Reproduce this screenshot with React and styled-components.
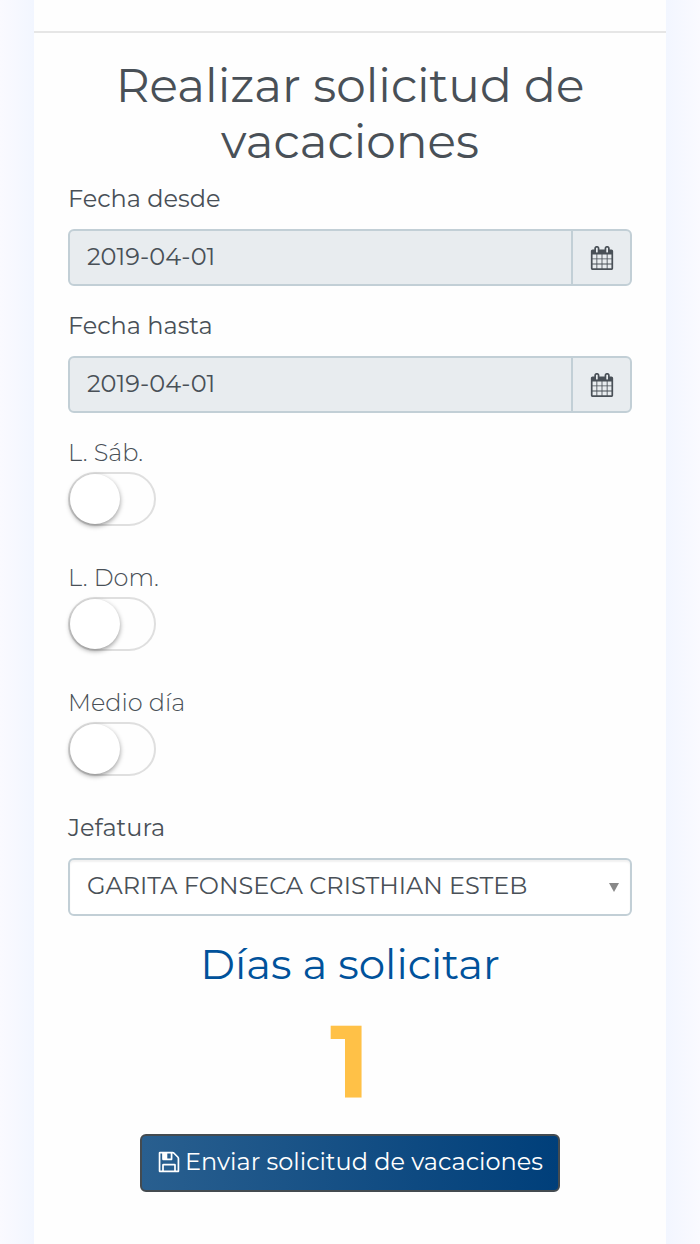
import React, { useState } from "react";
import styled, { createGlobalStyle } from "styled-components";

const App = () => {
  const [boss, setBoss] = useState("garita");

  return (
    <>
      <GlobalStyle />
      <Page>
        <Card>
          <Divider />
          <Form onSubmit={(e) => e.preventDefault()}>
            <Title>Realizar solicitud de vacaciones</Title>

            <DateField id="desde" label="Fecha desde" value="2019-04-01" />
            <DateField id="hasta" label="Fecha hasta" value="2019-04-01" />

            <Toggle id="sabado" label="L. Sáb." />
            <Toggle id="domingo" label="L. Dom." />
            <Toggle id="medio" label="Medio día" />

            <Field>
              <Label htmlFor="jefatura">Jefatura</Label>
              <SelectBox>
                <Select id="jefatura" value={boss} onChange={(e) => setBoss(e.target.value)}>
                  <option value="garita">GARITA FONSECA CRISTHIAN ESTEB</option>
                </Select>
                <Arrow viewBox="0 0 10 9" aria-hidden="true">
                  <path d="M0 0h10L5 9z" />
                </Arrow>
              </SelectBox>
            </Field>

            <Subtitle>Días a solicitar</Subtitle>
            <Days>1</Days>

            <Submit type="submit">
              <SaveIcon />
              Enviar solicitud de vacaciones
            </Submit>
          </Form>
        </Card>
      </Page>
    </>
  );
};

const DateField = ({ id, label, value }) => (
  <Field>
    <Label htmlFor={id}>{label}</Label>
    <InputGroup>
      <Input id={id} type="text" value={value} readOnly />
      <Addon type="button" aria-label={`Elegir ${label}`}>
        <CalendarIcon />
      </Addon>
    </InputGroup>
  </Field>
);

const Toggle = ({ id, label }) => (
  <SwitchField>
    <Label htmlFor={id} $light>{label}</Label>
    <Switch id={id} type="checkbox" role="switch" />
  </SwitchField>
);

const CalendarIcon = () => (
  <Icon viewBox="0 0 1792 1792" aria-hidden="true">
    <path d="M192 1664h288v-288h-288v288zm352 0h320v-288h-320v288zm-352-352h288v-320h-288v320zm352 0h320v-320h-320v320zm-352-384h288v-288h-288v288zm736 736h320v-288h-320v288zm-384-736h320v-288h-320v288zm768 736h288v-288h-288v288zm-384-352h320v-320h-320v320zm-352-864v-288q0-13-9.5-22.5t-22.5-9.5h-64q-13 0-22.5 9.5t-9.5 22.5v288q0 13 9.5 22.5t22.5 9.5h64q13 0 22.5-9.5t9.5-22.5zm736 864h288v-320h-288v320zm-384-384h320v-288h-320v288zm384 0h288v-288h-288v288zm32-480v-288q0-13-9.5-22.5t-22.5-9.5h-64q-13 0-22.5 9.5t-9.5 22.5v288q0 13 9.5 22.5t22.5 9.5h64q13 0 22.5-9.5t9.5-22.5zm384-64v1280q0 52-38 90t-90 38h-1408q-52 0-90-38t-38-90v-1280q0-52 38-90t90-38h128v-96q0-66 47-113t113-47h64q66 0 113 47t47 113v96h384v-96q0-66 47-113t113-47h64q66 0 113 47t47 113v96h128q52 0 90 38t38 90z" />
  </Icon>
);

const SaveIcon = () => (
  <Icon viewBox="0 0 1792 1792" aria-hidden="true">
    <path d="M512 1536h768v-384h-768v384zm896 0h128v-896q0-14-10-38.5t-20-34.5l-281-281q-10-10-34-20t-39-10v416q0 40-28 68t-68 28h-576q-40 0-68-28t-28-68v-416h-128v1280h128v-416q0-40 28-68t68-28h832q40 0 68 28t28 68v416zm-384-928v-320q0-13-9.5-22.5t-22.5-9.5h-192q-13 0-22.5 9.5t-9.5 22.5v320q0 13 9.5 22.5t22.5 9.5h192q13 0 22.5-9.5t9.5-22.5zm640 32v928q0 40-28 68t-68 28h-1344q-40 0-68-28t-28-68v-1344q0-40 28-68t68-28h928q40 0 88 20t76 48l280 280q28 28 48 76t20 88z" />
  </Icon>
);

const GlobalStyle = createGlobalStyle`
  * {
    box-sizing: border-box;
  }

  body {
    margin: 0;
    color: #495057;
    font-family: Montserrat, Inter, sans-serif;
    font-size: 24px;
    line-height: 36px;
  }

  button, input, select {
    margin: 0;
    font: inherit;
    color: inherit;
  }
`;

const Page = styled.div`
  min-height: 100vh;
  padding: 0 34px;
  display: flex;
  background: linear-gradient(
    to right,
    #fafaff 0,
    #f2f6ff 34px,
    #f2f6ff calc(100% - 34px),
    #fafaff 100%
  );
`;

const Card = styled.main`
  flex: 1;
  min-width: 0;
  padding-top: 31px;
  background: #fefefe;
`;

const Divider = styled.hr`
  height: 2px;
  margin: 0;
  border: 0;
  background: #e6e6e6;
`;

const Form = styled.form`
  display: flex;
  flex-direction: column;
  padding: 25px 34px 52px;
`;

const Title = styled.h1`
  margin: 0 0 11px;
  font-size: 47px;
  font-weight: 400;
  line-height: 56px;
  text-align: center;
`;

const Field = styled.div`
  display: flex;
  flex-direction: column;
  gap: 12px;
  margin-bottom: 22px;
`;

const SwitchField = styled.div`
  display: flex;
  flex-direction: column;
  align-items: flex-start;
  gap: 1px;
  margin-bottom: 34px;
`;

const Label = styled.label`
  font-weight: ${({ $light }) => ($light ? 300 : 400)};
`;

const InputGroup = styled.div`
  display: flex;
  height: 57px;
  border: 2px solid #c2cfd6;
  border-radius: 6px;
  background: #e8ecef;
  overflow: hidden;
`;

const Input = styled.input`
  flex: 1;
  min-width: 0;
  padding: 0 17px 2px;
  border: 0;
  outline: 0;
  background: transparent;
`;

const Addon = styled.button`
  width: 59px;
  padding: 0;
  display: flex;
  align-items: center;
  justify-content: center;
  border: 0;
  border-left: 2px solid #c2cfd6;
  background: transparent;
`;

const Icon = styled.svg`
  width: 24px;
  height: 24px;
  flex: none;
  fill: currentColor;
`;

const Switch = styled.input`
  appearance: none;
  width: 88px;
  height: 54px;
  border: 2px solid #dfdfdf;
  border-radius: 27px;
  background: #fefefe;
  cursor: pointer;

  &::before {
    content: "";
    display: block;
    width: 50px;
    height: 50px;
    border-radius: 50%;
    background: #fff;
    box-shadow: 0 2px 5px rgba(0, 0, 0, 0.4);
  }

  &:checked {
    border-color: #00529b;
    background: #00529b;
  }

  &:checked::before {
    margin-left: auto;
  }
`;

const SelectBox = styled.div`
  display: grid;
  align-items: center;
`;

const Select = styled.select`
  grid-area: 1 / 1;
  appearance: none;
  width: 100%;
  height: 58px;
  padding: 0 36px 2px 17px;
  border: 2px solid #c2cfd6;
  border-radius: 6px;
  background: #fff;
  box-shadow: inset 0 2px 2px rgba(0, 0, 0, 0.06);
`;

const Arrow = styled.svg`
  grid-area: 1 / 1;
  justify-self: end;
  width: 10px;
  height: 9px;
  margin-right: 13px;
  fill: #888;
  pointer-events: none;
`;

const Subtitle = styled.h2`
  margin: 0;
  color: #00529b;
  font-size: 42px;
  font-weight: 400;
  line-height: 52px;
  text-align: center;
`;

const Days = styled.p`
  margin: 11px 0 13px;
  color: #ffc147;
  font-size: 102px;
  font-weight: 700;
  line-height: 120px;
  text-align: center;
`;

const Submit = styled.button`
  align-self: center;
  display: flex;
  align-items: center;
  gap: 4px;
  min-height: 58px;
  padding: 0 15px 2px;
  border: 2px solid #444b50;
  border-radius: 6px;
  color: #fff;
  background: linear-gradient(to right, #295f8f, #003f7a);
  cursor: pointer;
`;

export default App;
